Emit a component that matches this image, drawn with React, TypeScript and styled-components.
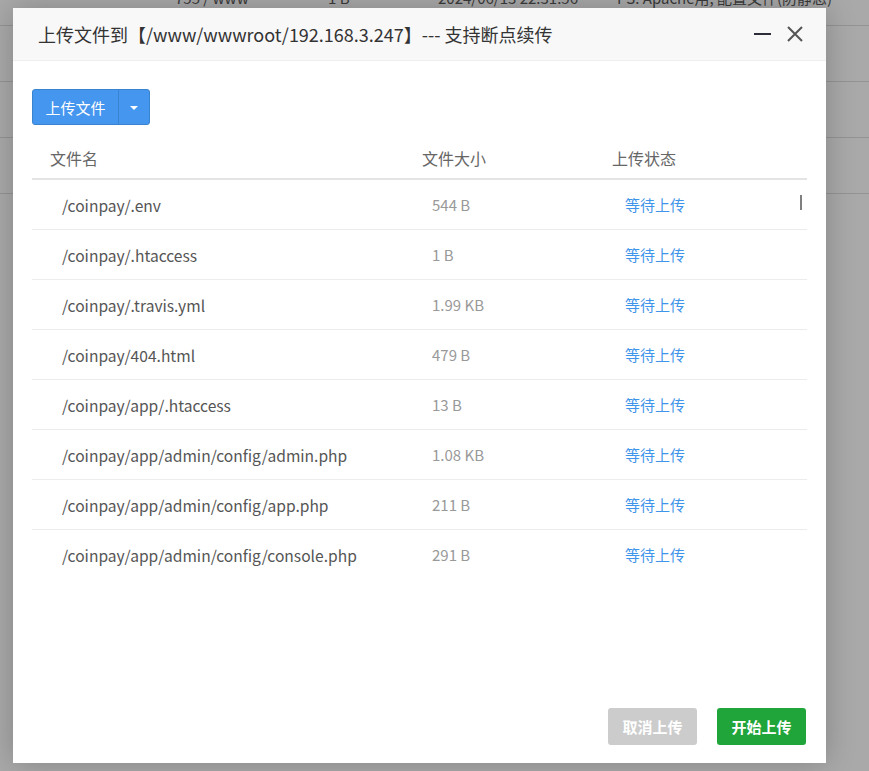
import React from "react";
import styled, { createGlobalStyle } from "styled-components";

const Global = createGlobalStyle`
  html, body { margin: 0; padding: 0; }
  body { font-family: "Microsoft YaHei", "Noto Sans CJK SC", "Noto Sans", sans-serif; }
`;

const Page = styled.div`
  position: relative;
  width: 869px;
  height: 771px;
  overflow: hidden;
  background: #a9a9a9;
`;

const BgTable = styled.div`
  margin-top: -30px;
  display: flex;
  flex-direction: column;
`;

const BgRow = styled.div`
  height: 56px;
  border-bottom: 1px solid #939393;
  box-sizing: border-box;
  display: grid;
  grid-template-columns: 175px 153px 110px 179px 1fr;
  align-items: center;
  font-size: 15px;
  color: #3a3a3a;
  white-space: nowrap;
`;

const BgCell = styled.span``;

const Modal = styled.div`
  position: absolute;
  left: 13px;
  top: 8px;
  width: 813px;
  height: 755px;
  background: #fff;
  box-shadow: 0 0 28px rgba(0, 0, 0, 0.22);
  display: flex;
  flex-direction: column;
`;

const Header = styled.div`
  height: 53px;
  box-sizing: border-box;
  background: #f8f8f8;
  border-bottom: 1px solid #eee;
  display: flex;
  align-items: center;
  padding: 0 22px 0 25px;
`;

const Title = styled.div`
  flex: 1;
  font-size: 18px;
  color: #333;
  white-space: nowrap;
  margin-top: -1px;
`;

const HeadIcons = styled.div`
  display: flex;
  align-items: center;
  gap: 14px;
`;

const IconBtn = styled.span`
  display: inline-flex;
  width: 18px;
  height: 18px;
  align-items: center;
  justify-content: center;
`;

const Body = styled.div`
  flex: 1;
  display: flex;
  flex-direction: column;
  padding: 28px 19px 18px 19px;
`;

const SplitButton = styled.div`
  display: inline-flex;
  align-self: flex-start;
  height: 36px;
  box-sizing: border-box;
  border: 1px solid #3a83cf;
  border-radius: 3px;
  background: #4596ee;
  overflow: hidden;
`;

const MainBtn = styled.span`
  width: 85px;
  display: flex;
  align-items: center;
  justify-content: center;
  color: #fff;
  font-size: 15px;
  border-right: 1px solid #3a83cf;
`;

const CaretBtn = styled.span`
  width: 30px;
  display: flex;
  align-items: center;
  justify-content: center;
`;

const Caret = styled.span`
  width: 0;
  height: 0;
  border-left: 4px solid transparent;
  border-right: 4px solid transparent;
  border-top: 4px solid #fff;
  margin-top: 2px;
`;

const Table = styled.div`
  position: relative;
  margin-top: 13px;
  display: flex;
  flex-direction: column;
`;

const HeadRow = styled.div`
  display: grid;
  grid-template-columns: 372px 190px 1fr;
  height: 42px;
  align-items: center;
  border-bottom: 2px solid #e4e4e4;
  box-sizing: border-box;
  font-size: 16px;
  color: #666;
`;

const HeadCell = styled.div<{ $pad: number }>`
  padding-left: ${(p) => p.$pad}px;
`;

const Row = styled.div<{ $last?: boolean }>`
  display: grid;
  grid-template-columns: 372px 190px 1fr;
  height: 50px;
  align-items: center;
  border-bottom: 1px solid ${(p) => (p.$last ? "transparent" : "#ececec")};
  box-sizing: border-box;
`;

const NameCell = styled.div`
  padding-left: 30px;
  font-size: 15.6px;
  color: #555;
  white-space: nowrap;
`;

const SizeCell = styled.div`
  padding-left: 28px;
  font-size: 15px;
  color: #999;
`;

const StatusCell = styled.div`
  padding-left: 31px;
  font-size: 15px;
  color: #3f95ea;
`;

const ScrollMark = styled.div`
  position: absolute;
  right: 5px;
  top: 57px;
  width: 2px;
  height: 15px;
  background: #808080;
`;

const Footer = styled.div`
  margin-top: auto;
  display: flex;
  justify-content: flex-end;
  gap: 20px;
  padding-right: 1px;
`;

const ActionBtn = styled.button<{ $bg: string }>`
  width: 89px;
  height: 37px;
  border: none;
  border-radius: 3px;
  background: ${(p) => p.$bg};
  color: #fff;
  font-family: inherit;
  font-size: 15px;
  font-weight: bold;
  padding: 0;
`;

const files = [
  ["/coinpay/.env", "544 B"],
  ["/coinpay/.htaccess", "1 B"],
  ["/coinpay/.travis.yml", "1.99 KB"],
  ["/coinpay/404.html", "479 B"],
  ["/coinpay/app/.htaccess", "13 B"],
  ["/coinpay/app/admin/config/admin.php", "1.08 KB"],
  ["/coinpay/app/admin/config/app.php", "211 B"],
  ["/coinpay/app/admin/config/console.php", "291 B"],
];

export default function App() {
  return (
    <Page>
      <Global />
      <BgTable>
        <BgRow>
          <BgCell />
          <BgCell>755 / www</BgCell>
          <BgCell>1 B</BgCell>
          <BgCell>2024/06/13 22:31:56</BgCell>
          <BgCell>PS: Apache用, 配置文件(防静态)</BgCell>
        </BgRow>
        <BgRow />
        <BgRow />
        <BgRow />
      </BgTable>
      <Modal>
        <Header>
          <Title>上传文件到【/www/wwwroot/192.168.3.247】--- 支持断点续传</Title>
          <HeadIcons>
            <IconBtn>
              <svg width="18" height="18" viewBox="0 0 18 18">
                <rect x="0" y="8" width="17" height="2" fill="#2d2d3a" />
              </svg>
            </IconBtn>
            <IconBtn>
              <svg width="18" height="18" viewBox="0 0 18 18">
                <path d="M2 2 L16 16 M16 2 L2 16" stroke="#555" strokeWidth="2" fill="none" />
              </svg>
            </IconBtn>
          </HeadIcons>
        </Header>
        <Body>
          <SplitButton>
            <MainBtn>上传文件</MainBtn>
            <CaretBtn>
              <Caret />
            </CaretBtn>
          </SplitButton>
          <Table>
            <HeadRow>
              <HeadCell $pad={18}>文件名</HeadCell>
              <HeadCell $pad={18}>文件大小</HeadCell>
              <HeadCell $pad={18}>上传状态</HeadCell>
            </HeadRow>
            {files.map(([name, size], i) => (
              <Row key={name} $last={i === files.length - 1}>
                <NameCell>{name}</NameCell>
                <SizeCell>{size}</SizeCell>
                <StatusCell>等待上传</StatusCell>
              </Row>
            ))}
            <ScrollMark />
          </Table>
          <Footer>
            <ActionBtn $bg="#cccccc">取消上传</ActionBtn>
            <ActionBtn $bg="#20a53a">开始上传</ActionBtn>
          </Footer>
        </Body>
      </Modal>
    </Page>
  );
}
